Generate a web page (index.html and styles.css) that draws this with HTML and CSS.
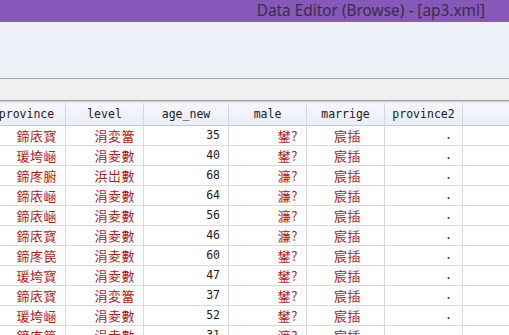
FILE: index.html
```html
<!DOCTYPE html>
<html lang="zh">
<head>
  <meta charset="UTF-8">
  <title>Data Editor (Browse) - [ap3.xml]</title>
  <meta name="viewport" content="width=device-width, initial-scale=1">
  <link rel="stylesheet" href="styles.css">
</head>
<body>

<header class="titlebar">
  <span class="title">Data Editor (Browse) - [ap3.xml]</span>
</header>

<div class="toolbar"></div>
<div class="strip"></div>
<div class="sep"></div>

<main class="grid">
  <div class="h">province</div>
  <div class="h">level</div>
  <div class="h">age_new</div>
  <div class="h">male</div>
  <div class="h">marrige</div>
  <div class="h">province2</div>
  <div class="h f"></div>

  <div class="c s">鍗庡寳</div><div class="c s">涓変簹</div><div class="c n">35</div><div class="c s">鐢?</div><div class="c s wide">宸插</div><div class="c n dot">.</div><div class="c f"></div>
  <div class="c s">瑗垮崡</div><div class="c s">涓夌數</div><div class="c n">40</div><div class="c s">鐢?</div><div class="c s wide">宸插</div><div class="c n dot">.</div><div class="c f"></div>
  <div class="c s">鍗庝腑</div><div class="c s">浜岀數</div><div class="c n">68</div><div class="c s">濂?</div><div class="c s wide">宸插</div><div class="c n dot">.</div><div class="c f"></div>
  <div class="c s">鍗庡崡</div><div class="c s">涓夌數</div><div class="c n">64</div><div class="c s">濂?</div><div class="c s wide">宸插</div><div class="c n dot">.</div><div class="c f"></div>
  <div class="c s">鍗庡崡</div><div class="c s">涓夌數</div><div class="c n">56</div><div class="c s">濂?</div><div class="c s wide">宸插</div><div class="c n dot">.</div><div class="c f"></div>
  <div class="c s">鍗庡寳</div><div class="c s">涓夌數</div><div class="c n">46</div><div class="c s">濂?</div><div class="c s wide">宸插</div><div class="c n dot">.</div><div class="c f"></div>
  <div class="c s">鍗庝笢</div><div class="c s">涓夌數</div><div class="c n">60</div><div class="c s">鐢?</div><div class="c s wide">宸插</div><div class="c n dot">.</div><div class="c f"></div>
  <div class="c s">瑗垮寳</div><div class="c s">涓夌數</div><div class="c n">47</div><div class="c s">鐢?</div><div class="c s wide">宸插</div><div class="c n dot">.</div><div class="c f"></div>
  <div class="c s">鍗庡寳</div><div class="c s">涓変簹</div><div class="c n">37</div><div class="c s">鐢?</div><div class="c s wide">宸插</div><div class="c n dot">.</div><div class="c f"></div>
  <div class="c s">瑗垮崡</div><div class="c s">涓夌數</div><div class="c n">52</div><div class="c s">鐢?</div><div class="c s wide">宸插</div><div class="c n dot">.</div><div class="c f"></div>
  <div class="c s">鍗庝笢</div><div class="c s">涓夌數</div><div class="c n">31</div><div class="c s">濂?</div><div class="c s wide">宸插</div><div class="c n dot">.</div><div class="c f"></div>
</main>

</body>
</html>
```

FILE: styles.css
```css
/* Stata-style data editor window, browse mode */
html, body { margin: 0; padding: 0; height: 100%; overflow: hidden; background: #ffffff; }

.titlebar { height: 22px; background: #8658b9; display: flex; justify-content: flex-end; align-items: center; padding-right: 24px; }
.title { font-family: "Noto Sans", "Open Sans", sans-serif; font-size: 15.4px; line-height: 22px; color: #3a2d4c; }

.toolbar { height: 56px; background: #eef0f8; border-bottom: 1px solid #a3a3a3; }
.strip { height: 21px; background: #f0f0f0; }
.sep { height: 3px; box-sizing: border-box; border-top: 1px solid #9c9c9c; background: #d3d3d3; border-bottom: 1px solid #e6e6e6; }

.grid { display: grid; grid-template-columns: 78px 78px 85px 78px 78px 78px 1fr; margin-left: -12px; }

.h { height: 23px; box-sizing: border-box; background: linear-gradient(#f5f7fc, #eaeef7); border-right: 1px solid #d3d8e5; border-bottom: 1px solid #c6cbd8; font-family: "DejaVu Sans Mono", "Liberation Mono", monospace; font-size: 11.5px; line-height: 22px; color: #202020; text-align: center; white-space: nowrap; overflow: hidden; }

.c { height: 20px; box-sizing: border-box; border-right: 1px solid #d6dae7; border-bottom: 1px solid #d6dae7; padding-right: 8px; text-align: right; white-space: nowrap; overflow: hidden; line-height: 19px; }
.s { font-family: "Noto Sans CJK SC", "Noto Sans", sans-serif; font-size: 13px; letter-spacing: 0.5px; color: #ab1c1c; }
.n { font-family: "DejaVu Sans Mono", "Liberation Mono", monospace; font-size: 11.5px; color: #1c1c1c; }
.wide { padding-right: 23px; }
.dot { padding-right: 10px; }
.f { border-right: none; }
```
